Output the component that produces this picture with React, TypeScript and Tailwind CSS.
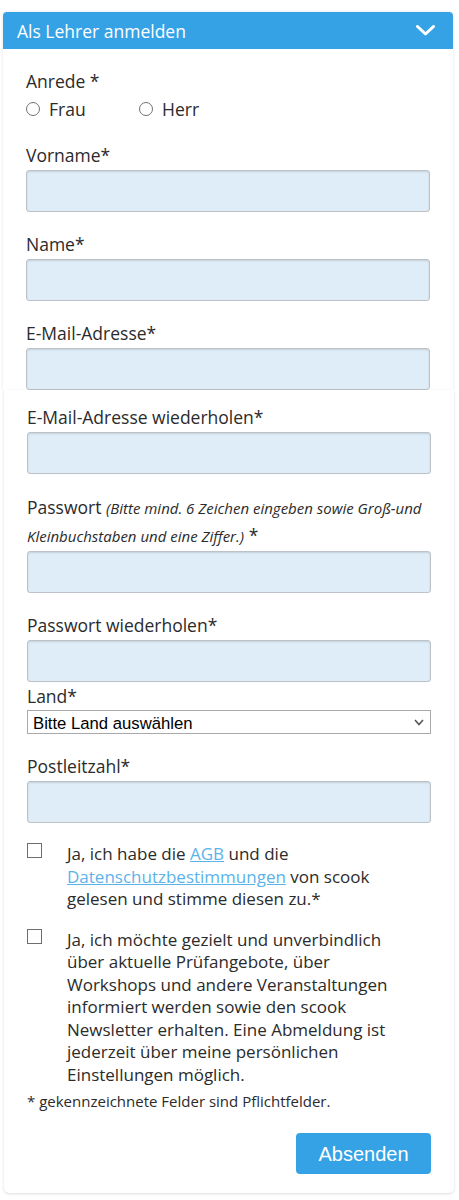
import React from "react"

function Label({ children }: { children: React.ReactNode }) {
  return <div className="mb-[2px] text-[17.5px] leading-[25px]">{children}</div>
}

function TextInput({ type = "text" }: { type?: string }) {
  return (
    <input
      type={type}
      className="block h-[42px] w-full rounded-[3px] border border-[#bcc2c8] bg-[#deedf8] shadow-[inset_0_1px_2px_rgba(0,0,0,0.12)] outline-none"
    />
  )
}

function Radio({ label, className }: { label: string; className?: string }) {
  return (
    <label className={"flex items-center gap-[9px] " + (className ?? "")}>
      <span className="h-[14px] w-[14px] shrink-0 rounded-full border border-[#727272] bg-white" />
      <span>{label}</span>
    </label>
  )
}

function Check({ children, className }: { children: React.ReactNode; className?: string }) {
  return (
    <div className={"flex items-start " + (className ?? "")}>
      <span className="h-[15px] w-[15px] shrink-0 border border-[#6e6e6e] bg-white" />
      <p className="ml-[25px] pr-[16px] text-[17px] leading-[22.5px]">{children}</p>
    </div>
  )
}

export default function App() {
  return (
    <div className="min-h-[1200px] bg-white pt-[12px] font-['Open_Sans',sans-serif] text-[#2b2b2b]">
      {/* upper part */}
      <div className="ml-[3px] w-[450px] rounded-t-[4px] bg-white shadow-[0_0_3px_rgba(0,0,0,0.12)]">
        <div className="flex h-[37px] items-center justify-between rounded-t-[4px] bg-[#35a2e6] pl-[14px] pr-[18px] text-[17.5px] leading-[24px] text-white">
          <span>Als Lehrer anmelden</span>
          <svg width="19" height="11" viewBox="0 0 19 11" fill="none">
            <path d="M1.5 1.5 L9.5 9 L17.5 1.5" stroke="white" strokeWidth="3" strokeLinecap="round" strokeLinejoin="round" />
          </svg>
        </div>

        <div className="px-[23px] pt-[20px]">
          <div className="text-[17.5px] leading-[24px]">Anrede *</div>
          <div className="mt-[4px] flex h-[24px] items-center text-[17.5px]">
            <Radio label="Frau" className="w-[113px]" />
            <Radio label="Herr" />
          </div>

          <div className="mt-[22px]">
            <Label>Vorname*</Label>
            <TextInput />
          </div>
          <div className="mt-[20px]">
            <Label>Name*</Label>
            <TextInput />
          </div>
          <div className="mt-[20px]">
            <Label>E-Mail-Adresse*</Label>
            <TextInput type="email" />
          </div>
        </div>
      </div>

      {/* lower part */}
      <div className="ml-[4px] w-[450px] rounded-b-[5px] bg-white px-[23px] pb-[19px] pt-[15px] shadow-[0_1px_3px_rgba(0,0,0,0.14)]">
        <div>
          <Label>E-Mail-Adresse wiederholen*</Label>
          <TextInput type="email" />
        </div>

        <div className="mt-[19px]">
          <div className="mb-[2px] text-[17.5px] leading-[28px]">
            Passwort{" "}
            <em className="text-[15px] leading-[0]">
              (Bitte mind. 6 Zeichen eingeben sowie Groß-und Kleinbuchstaben und eine Ziffer.)
            </em>{" "}
            *
          </div>
          <TextInput type="password" />
        </div>

        <div className="mt-[20px]">
          <Label>Passwort wiederholen*</Label>
          <TextInput type="password" />
        </div>

        <div className="mt-[2px]">
          <div className="mb-[1px] text-[17.5px] leading-[25px]">Land*</div>
          <div className="relative h-[24px] border border-[#a9a9a9] bg-white">
            <select className="h-full w-full appearance-none bg-transparent pl-[5px] font-['Liberation_Sans',Arial,sans-serif] text-[16.7px] leading-[22px] text-black outline-none">
              <option>Bitte Land auswählen</option>
            </select>
            <svg
              className="pointer-events-none absolute right-[6px] top-[8px]"
              width="10"
              height="7"
              viewBox="0 0 10 7"
              fill="none"
            >
              <path d="M1 1 L5 5.5 L9 1" stroke="#555" strokeWidth="1.6" />
            </svg>
          </div>
        </div>

        <div className="mt-[20px]">
          <Label>Postleitzahl*</Label>
          <TextInput />
        </div>

        <Check className="mt-[20px]">
          Ja, ich habe die{" "}
          <a href="#" className="text-[#5cb3ea] underline">
            AGB
          </a>{" "}
          und die{" "}
          <a href="#" className="text-[#5cb3ea] underline">
            Datenschutzbestimmungen
          </a>{" "}
          von scook gelesen und stimme diesen zu.*
        </Check>

        <Check className="mt-[18px]">
          Ja, ich möchte gezielt und unverbindlich über aktuelle Prüfangebote, über Workshops und
          andere Veranstaltungen informiert werden sowie den scook Newsletter erhalten. Eine
          Abmeldung ist jederzeit über meine persönlichen Einstellungen möglich.
        </Check>

        <p className="mt-[5px] text-[15px] leading-[20px]">* gekennzeichnete Felder sind Pflichtfelder.</p>

        <div className="mt-[22px] flex justify-end">
          <button className="h-[41px] w-[135px] rounded-[4px] bg-[#35a2e6] font-['Liberation_Sans',Arial,sans-serif] text-[20px] text-white">
            Absenden
          </button>
        </div>
      </div>
    </div>
  )
}
